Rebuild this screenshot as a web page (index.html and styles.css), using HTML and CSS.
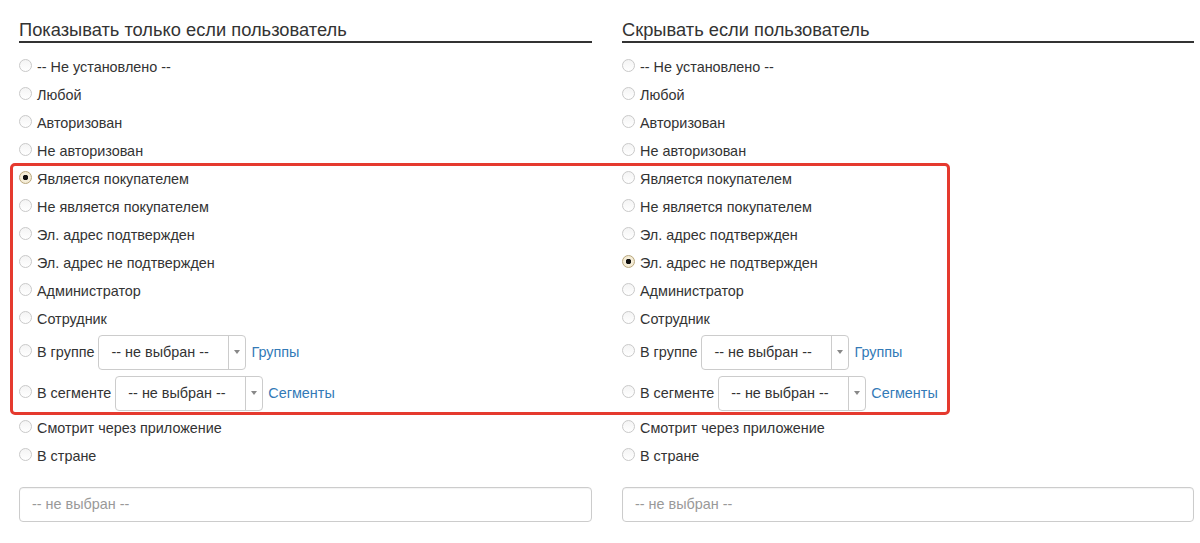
FILE: index.html
```html
<!DOCTYPE html>
<html lang="ru">
<head>
<meta charset="utf-8">
<title>Условия</title>
<link rel="stylesheet" href="styles.css">
</head>
<body>
<div class="page">
  <section class="col">
    <h2 class="legend">Показывать только если пользователь</h2>
    <div class="options">
      <label class="opt"><span class="radio"></span>-- Не установлено --</label>
      <label class="opt"><span class="radio"></span>Любой</label>
      <label class="opt"><span class="radio"></span>Авторизован</label>
      <label class="opt"><span class="radio"></span>Не авторизован</label>
      <label class="opt"><span class="radio checked"></span>Является покупателем</label>
      <label class="opt"><span class="radio"></span>Не является покупателем</label>
      <label class="opt"><span class="radio"></span>Эл. адрес подтвержден</label>
      <label class="opt"><span class="radio"></span>Эл. адрес не подтвержден</label>
      <label class="opt"><span class="radio"></span>Администратор</label>
      <label class="opt"><span class="radio"></span>Сотрудник</label>
      <div class="opt sel-row"><span class="radio"></span>В группе<span class="select"><span class="sel-text">-- не выбран --</span><span class="sel-arrow"></span></span><a class="link" href="#">Группы</a></div>
      <div class="opt sel-row"><span class="radio"></span>В сегменте<span class="select"><span class="sel-text">-- не выбран --</span><span class="sel-arrow"></span></span><a class="link" href="#">Сегменты</a></div>
      <label class="opt"><span class="radio"></span>Смотрит через приложение</label>
      <label class="opt"><span class="radio"></span>В стране</label>
    </div>
    <div class="input">-- не выбран --</div>
  </section>
  <section class="col">
    <h2 class="legend">Скрывать если пользователь</h2>
    <div class="options">
      <label class="opt"><span class="radio"></span>-- Не установлено --</label>
      <label class="opt"><span class="radio"></span>Любой</label>
      <label class="opt"><span class="radio"></span>Авторизован</label>
      <label class="opt"><span class="radio"></span>Не авторизован</label>
      <label class="opt"><span class="radio"></span>Является покупателем</label>
      <label class="opt"><span class="radio"></span>Не является покупателем</label>
      <label class="opt"><span class="radio"></span>Эл. адрес подтвержден</label>
      <label class="opt"><span class="radio checked"></span>Эл. адрес не подтвержден</label>
      <label class="opt"><span class="radio"></span>Администратор</label>
      <label class="opt"><span class="radio"></span>Сотрудник</label>
      <div class="opt sel-row"><span class="radio"></span>В группе<span class="select"><span class="sel-text">-- не выбран --</span><span class="sel-arrow"></span></span><a class="link" href="#">Группы</a></div>
      <div class="opt sel-row"><span class="radio"></span>В сегменте<span class="select"><span class="sel-text">-- не выбран --</span><span class="sel-arrow"></span></span><a class="link" href="#">Сегменты</a></div>
      <label class="opt"><span class="radio"></span>Смотрит через приложение</label>
      <label class="opt"><span class="radio"></span>В стране</label>
    </div>
    <div class="input">-- не выбран --</div>
  </section>
  <div class="highlight"></div>
</div>
</body>
</html>
```

FILE: styles.css
```css
* { box-sizing: border-box; }
html, body { margin: 0; padding: 0; background: #fff; }
body {
  font-family: "Liberation Sans", Arial, sans-serif;
  font-size: 14.4px;
  color: #333;
}
.page {
  position: relative;
  display: grid;
  grid-template-columns: 573px 572px;
  column-gap: 30px;
  padding: 0 6px 0 19px;
}
.legend {
  margin: 0;
  padding-top: 19px;
  font-size: 18.3px;
  font-weight: normal;
  line-height: 22px;
  color: #333;
  border-bottom: 2px solid #333;
}
.options {
  display: flex;
  flex-direction: column;
  margin-top: 10px;
}
.opt {
  display: flex;
  align-items: center;
  height: 28px;
  line-height: 28px;
  white-space: nowrap;
}
.radio {
  width: 13px;
  height: 13px;
  margin-right: 5px;
  border-radius: 50%;
  border: 1px solid #c9c9c9;
  background: linear-gradient(#f4f4f4, #fff);
  flex: none;
  position: relative;
  top: -2px;
}
.radio.checked {
  border-color: #b9a77e;
  background: radial-gradient(circle, #111 0 2.5px, #f6efdc 3px, #efe4c6 100%);
}
.sel-row {
  height: 34px;
  margin: 2px 0 5px;
}
.sel-row + .sel-row {
  margin-bottom: 4px;
}
.select {
  display: flex;
  align-items: stretch;
  width: 148px;
  height: 35px;
  margin-left: 4px;
  border: 1px solid #ccc;
  border-radius: 4px;
  background: #fff;
  line-height: 33px;
}
.sel-text {
  flex: 1;
  padding-left: 12px;
  color: #333;
}
.sel-arrow {
  width: 17px;
  border-left: 1px solid #ccc;
  display: flex;
  align-items: center;
  justify-content: center;
}
.sel-arrow::after {
  content: "";
  width: 0;
  height: 0;
  border-left: 3px solid transparent;
  border-right: 3px solid transparent;
  border-top: 4px solid #888;
}
.link {
  margin-left: 5px;
  color: #337ab7;
  text-decoration: none;
}
.input {
  margin-top: 17px;
  height: 35px;
  line-height: 33px;
  padding-left: 12px;
  border: 1px solid #ccc;
  border-radius: 4px;
  color: #999;
  box-shadow: inset 0 1px 1px rgba(0,0,0,0.05);
}
.highlight {
  position: absolute;
  left: 10px;
  top: 163px;
  width: 940px;
  height: 252px;
  border: 3px solid #e53a2f;
  border-radius: 5px;
  pointer-events: none;
}
```
